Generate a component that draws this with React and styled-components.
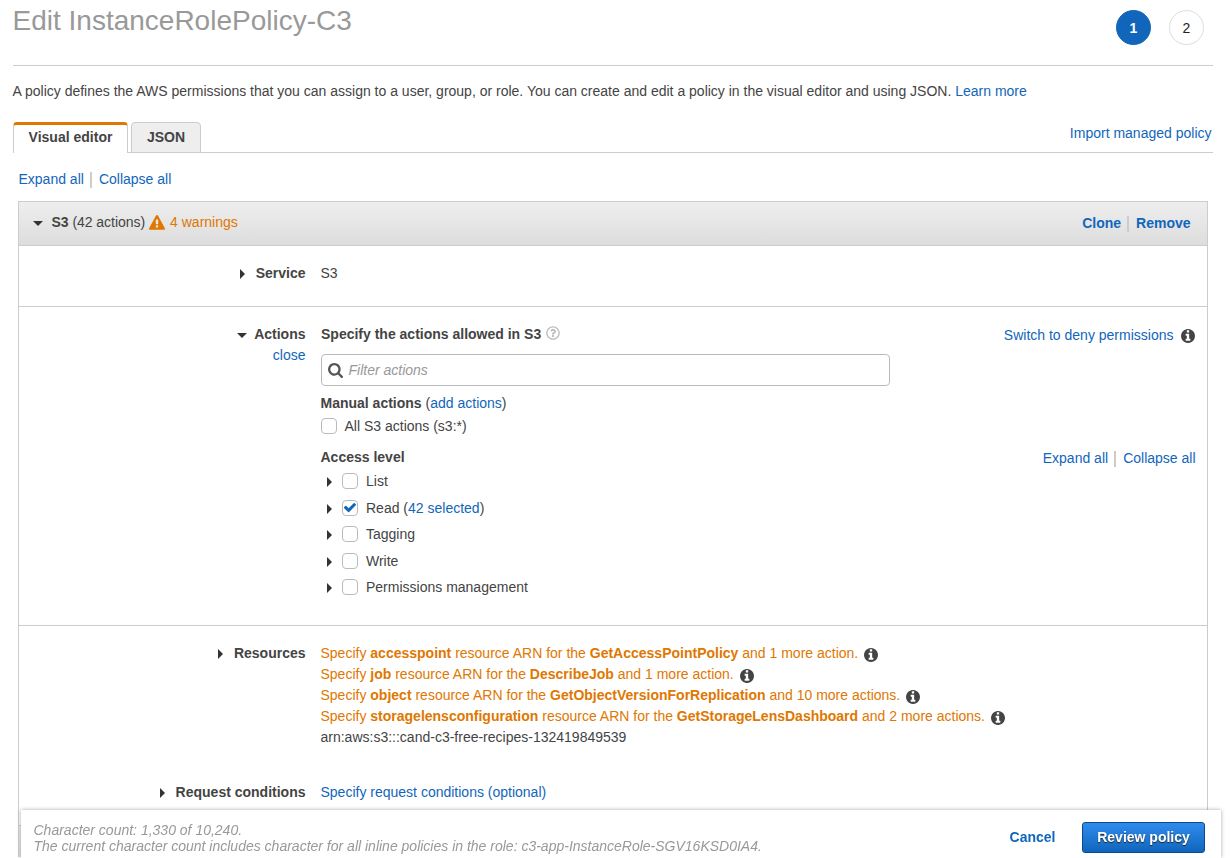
import React from "react";
import styled, { createGlobalStyle, css } from "styled-components";
import { FaRegQuestionCircle } from "react-icons/fa";

const GlobalStyle = createGlobalStyle`
  *, *::before, *::after { box-sizing: border-box; }
  html, body { margin: 0; height: 858px; overflow: hidden; background: #fff; }
  body {
    font: 14px/21px "Liberation Sans", Arial, sans-serif;
    color: #444;
  }
`;

const Page = styled.main`
  height: 857px;
  padding: 0 17px 0 13px;
  overflow: hidden;
  white-space: nowrap;
`;

const Header = styled.header`
  display: flex;
  justify-content: space-between;
  height: 66px;
  border-bottom: 1px solid #ccc;
`;

const Title = styled.h1`
  margin: 5px 0 0 -0.5px;
  font-size: 28px;
  line-height: 32px;
  font-weight: 400;
  color: #999;
`;

const Steps = styled.div`
  display: flex;
  gap: 18px;
  padding: 10px 9px 0 0;
`;

const Step = styled.span`
  display: flex;
  align-items: center;
  justify-content: center;
  width: 35px;
  height: 35px;
  padding-top: 1px;
  border: 1px solid #ddd;
  border-radius: 50%;
  color: #222;
  ${(p) => p.$active && css`
    background: #1166bb;
    border-color: #1166bb;
    color: #fff;
    font-weight: 700;
  `}
`;

const Link = styled.a`
  color: #1166bb;
  cursor: pointer;
  font-weight: ${(p) => (p.$bold ? 700 : 400)};
`;

const Intro = styled.p`
  margin: 15px 0 0 -0.5px;
`;

const TabBar = styled.div`
  display: flex;
  justify-content: space-between;
  height: 31px;
  margin-top: 20px;
  border-bottom: 1px solid #ccc;
`;

const Tabs = styled.div`
  display: flex;
  gap: 3px;
  height: 31px;
`;

const Tab = styled.button`
  width: ${(p) => p.$width}px;
  padding: 0 0 1px;
  font: 700 14px/21px "Liberation Sans", Arial, sans-serif;
  color: #444;
  border: 1px solid #ccc;
  border-radius: 4px 4px 0 0;
  background: #eee;
  ${(p) => p.$active && css`
    background: #fff;
    border-top: 3px solid #e07700;
    border-bottom: 0;
    padding-bottom: 3px;
  `}
`;

const TabAction = styled.div`
  padding: 1px 1.5px 0 0;
`;

const LinkPair = styled.div`
  display: flex;
  align-items: center;
`;

const Divider = styled.i`
  width: 2px;
  height: 16px;
  margin: 0 7px 0 6px;
  background: #ccc;
`;

const TopLinks = styled.div`
  margin: 16px 0 11px 5.5px;
`;

const Panel = styled.section`
  margin: 0 5px;
  height: ${(p) => p.$height}px;
  border: 1px solid #ccc;
  border-bottom: 0;
`;

const PanelHeader = styled.header`
  display: flex;
  justify-content: space-between;
  align-items: flex-start;
  height: 44px;
  padding: 10px 16.5px 0 14px;
  background: linear-gradient(#eee, #ddd);
  border-bottom: 1px solid #ccc;
`;

const PanelTitle = styled.div`
  display: flex;
  align-items: center;
`;

const Caret = styled.i`
  flex: none;
  width: 0;
  height: 0;
  border: solid transparent;
  ${(p) => p.$open
    ? css`border-width: 5px 5px 0; border-top-color: #333; margin-top: 1px;`
    : css`border-width: 5px 0 5px 5.5px; border-left-color: #333;`}
`;

const PanelName = styled.span`
  margin: 0 4px 0 8.5px;
  letter-spacing: -0.04px;
`;

const Warning = styled.span`
  display: flex;
  align-items: center;
  gap: 5px;
  color: #e07700;
`;

const PanelActions = styled.div`
  padding-top: 1px;
`;

const Row = styled.div`
  display: grid;
  grid-template-columns: 286.5px 1fr;
  column-gap: 15px;
  height: ${(p) => p.$height}px;
  padding-top: 17px;
  border-bottom: ${(p) => (p.$last ? "0" : "1px solid #ccc")};
`;

const RowLabel = styled.div`
  text-align: right;
`;

const LabelLine = styled.div`
  display: flex;
  align-items: center;
  justify-content: flex-end;
  gap: ${(p) => p.$gap || 10.5}px;
  font-weight: 700;
`;

const RowBody = styled.div`
  min-width: 0;
`;

const Split = styled.div`
  display: flex;
  justify-content: space-between;
  height: 21px;
  padding-right: ${(p) => p.$end}px;
`;

const Aside = styled.div`
  display: flex;
  align-items: center;
  gap: 7.5px;
  padding-top: 1px;
  height: 22px;
`;

const Heading = styled.div`
  display: flex;
  align-items: center;
  gap: 5px;
  font-weight: 700;
  padding-left: 0.5px;
  svg { color: #bbb; margin-bottom: 3px; }
`;

const Filter = styled.div`
  display: flex;
  align-items: center;
  gap: 6px;
  width: 569px;
  height: 32px;
  margin: 9px 0 7px 0.5px;
  padding-left: 5.5px;
  border: 1px solid #bbb;
  border-radius: 4px;
  color: #999;
  font-style: italic;
  svg { color: #555; }
`;

const Box = styled.span`
  display: flex;
  align-items: center;
  justify-content: center;
  width: 16px;
  height: 16px;
  margin-bottom: 1px;
  border: 1px solid #bbb;
  border-radius: 4px;
  background: #fff;
  color: #1166bb;
`;

const Option = styled.div`
  display: flex;
  align-items: center;
  gap: 8px;
  height: 25px;
  margin-bottom: 8px;
`;

const Level = styled.div`
  display: flex;
  align-items: center;
  height: 26.5px;
  padding-left: 6.5px;
  gap: 8.5px;
  ${Caret} { margin: 1.5px 1px 0 0; }
`;

const Levels = styled.div`
  padding-top: 0.25px;
`;

const Arn = styled.div`
  display: flex;
  align-items: center;
  gap: 6px;
  color: #e07700;
  svg { color: #444; margin-top: 3px; }
`;

const Footer = styled.footer`
  position: fixed;
  left: 21px;
  top: 810px;
  width: 1200px;
  height: 48px;
  display: flex;
  justify-content: space-between;
  padding: 12px 16px 0 12.5px;
  background: #fff;
  box-shadow: 0 0 4px rgba(0, 0, 0, 0.35);
  white-space: nowrap;
`;

const Count = styled.div`
  font-style: italic;
  line-height: 16px;
  color: #999;
`;

const Buttons = styled.div`
  display: flex;
  align-items: center;
  gap: 26.5px;
  height: 31px;
`;

const Primary = styled.button`
  width: 123px;
  height: 31px;
  padding: 0;
  font: 700 14px/21px "Liberation Sans", Arial, sans-serif;
  color: #fff;
  text-shadow: 0 1px 1px #222;
  background: linear-gradient(#2e8bee, #1166bb);
  border: 1px solid #0b4a8a;
  border-radius: 3px;
`;

const icons = {
  info: {
    box: "0 128 1536 1536",
    d: "M1024 1376v-160q0-14-9-23t-23-9h-96v-512q0-14-9-23t-23-9h-320q-14 0-23 9t-9 23v160q0 14 9 23t23 9h96v320h-96q-14 0-23 9t-9 23v160q0 14 9 23t23 9h448q14 0 23-9t9-23zm-128-896v-192q0-14-9-23t-23-9h-192q-14 0-23 9t-9 23v192q0 14 9 23t23 9h192q14 0 23-9t9-23zm640 416q0 209-103 385.5t-279.5 279.5-385.5 103-385.5-103-279.5-279.5-103-385.5 103-385.5 279.5-279.5 385.5-103 385.5 103 279.5 279.5 103 385.5z",
  },
  check: {
    box: "121 200 1550 1550",
    d: "M1671 566q0 40-28 68l-724 724-136 136q-28 28-68 28t-68-28l-136-136-362-362q-28-28-28-68t28-68l136-136q28-28 68-28t68 28l294 295 656-657q28-28 68-28t68 28l136 136q28 28 28 68z",
  },
  search: {
    box: "64 128 1664 1664",
    d: "M1216 832q0-185-131.5-316.5t-316.5-131.5-316.5 131.5-131.5 316.5 131.5 316.5 316.5 131.5 316.5-131.5 131.5-316.5zm512 832q0 52-38 90t-90 38q-54 0-90-38l-343-342q-179 124-399 124-143 0-273.5-55.5t-225-150-150-225-55.5-273.5 55.5-273.5 150-225 225-150 273.5-55.5 273.5 55.5 225 150 150 225 55.5 273.5q0 220-124 399l343 343q37 37 37 90z",
  },
  warning: {
    box: "0 0 1792 1792",
    d: "M1024 1375v-190q0-14-9.5-23.5t-22.5-9.5h-192q-13 0-22.5 9.5t-9.5 23.5v190q0 14 9.5 23.5t22.5 9.5h192q13 0 22.5-9.5t9.5-23.5zm-2-374l18-459q0-12-10-19-13-11-24-11h-220q-11 0-24 11-10 7-10 21l17 457q0 10 10 16.5t24 6.5h185q14 0 23.5-6.5t10.5-16.5zm-14-934l768 1408q35 63-2 126-17 29-46.5 46t-63.5 17h-1536q-34 0-63.5-17t-46.5-46q-37-63-2-126l768-1408q17-31 47-49t65-18 65 18 47 49z",
  },
};

function Icon({ name, size = 14, color = "currentColor" }) {
  return (
    <svg width={size} height={size} viewBox={icons[name].box} fill={color} color={color}>
      <path d={icons[name].d} />
    </svg>
  );
}

const levels = [
  { name: "List" },
  { name: "Read", selected: "42 selected" },
  { name: "Tagging" },
  { name: "Write" },
  { name: "Permissions management" },
];

const arns = [
  ["accesspoint", "GetAccessPointPolicy", "1 more action."],
  ["job", "DescribeJob", "1 more action."],
  ["object", "GetObjectVersionForReplication", "10 more actions."],
  ["storagelensconfiguration", "GetStorageLensDashboard", "2 more actions."],
];

function ExpandLinks() {
  return (
    <LinkPair>
      <Link>Expand all</Link>
      <Divider />
      <Link>Collapse all</Link>
    </LinkPair>
  );
}

export default function App() {
  return (
    <>
      <GlobalStyle />
      <Page>
        <Header>
          <Title>Edit InstanceRolePolicy-C3</Title>
          <Steps>
            <Step $active>1</Step>
            <Step>2</Step>
          </Steps>
        </Header>
        <Intro>
          A policy defines the AWS permissions that you can assign to a user, group, or role. You can create and edit a
          policy in the visual editor and using JSON. <Link>Learn more</Link>
        </Intro>
        <TabBar>
          <Tabs>
            <Tab $active $width={115}>Visual editor</Tab>
            <Tab $width={70}>JSON</Tab>
          </Tabs>
          <TabAction><Link>Import managed policy</Link></TabAction>
        </TabBar>
        <TopLinks><ExpandLinks /></TopLinks>
        <Panel $height={624}>
          <PanelHeader>
            <PanelTitle>
              <Caret $open />
              <PanelName><b>S3</b> (42 actions)</PanelName>
              <Warning><Icon name="warning" size={16} />4 warnings</Warning>
            </PanelTitle>
            <PanelActions>
              <LinkPair>
                <Link $bold>Clone</Link>
                <Divider />
                <Link $bold>Remove</Link>
              </LinkPair>
            </PanelActions>
          </PanelHeader>
          <Row $height={61}>
            <RowLabel><LabelLine $gap={10.5}><Caret />Service</LabelLine></RowLabel>
            <RowBody>S3</RowBody>
          </Row>
          <Row $height={319}>
            <RowLabel>
              <LabelLine $gap={7}><Caret $open />Actions</LabelLine>
              <Link>close</Link>
            </RowLabel>
            <RowBody>
              <Split $end={12}>
                <Heading>Specify the actions allowed in S3<FaRegQuestionCircle size={14} /></Heading>
                <Aside><Link>Switch to deny permissions</Link><Icon name="info" color="#444" /></Aside>
              </Split>
              <Filter><Icon name="search" size={15} />Filter actions</Filter>
              <div><b>Manual actions</b> (<Link>add actions</Link>)</div>
              <Option><Box />All S3 actions (s3:*)</Option>
              <Split $end={11.5}>
                <b>Access level</b>
                <Aside><ExpandLinks /></Aside>
              </Split>
              <Levels>
                {levels.map((l) => (
                  <Level key={l.name}>
                    <Caret />
                    <Box>{l.selected && <Icon name="check" size={12} />}</Box>
                    <span>{l.name}{l.selected && <> (<Link>{l.selected}</Link>)</>}</span>
                  </Level>
                ))}
              </Levels>
            </RowBody>
          </Row>
          <Row $height={139} $last>
            <RowLabel><LabelLine><Caret />Resources</LabelLine></RowLabel>
            <RowBody>
              {arns.map(([res, action, more]) => (
                <Arn key={res}>
                  <span>Specify <b>{res}</b> resource ARN for the <b>{action}</b> and {more}</span>
                  <Icon name="info" />
                </Arn>
              ))}
              <div>arn:aws:s3:::cand-c3-free-recipes-132419849539</div>
            </RowBody>
          </Row>
          <Row $height={60} $last>
            <RowLabel><LabelLine><Caret />Request conditions</LabelLine></RowLabel>
            <RowBody><Link>Specify request conditions (optional)</Link></RowBody>
          </Row>
        </Panel>
        <Panel $height={45}>
          <PanelHeader />
        </Panel>
      </Page>
      <Footer>
        <Count>
          Character count: 1,330 of 10,240.<br />
          The current character count includes character for all inline policies in the role:
          c3-app-InstanceRole-SGV16KSD0IA4.
        </Count>
        <Buttons>
          <Link $bold>Cancel</Link>
          <Primary>Review policy</Primary>
        </Buttons>
      </Footer>
    </>
  );
}
